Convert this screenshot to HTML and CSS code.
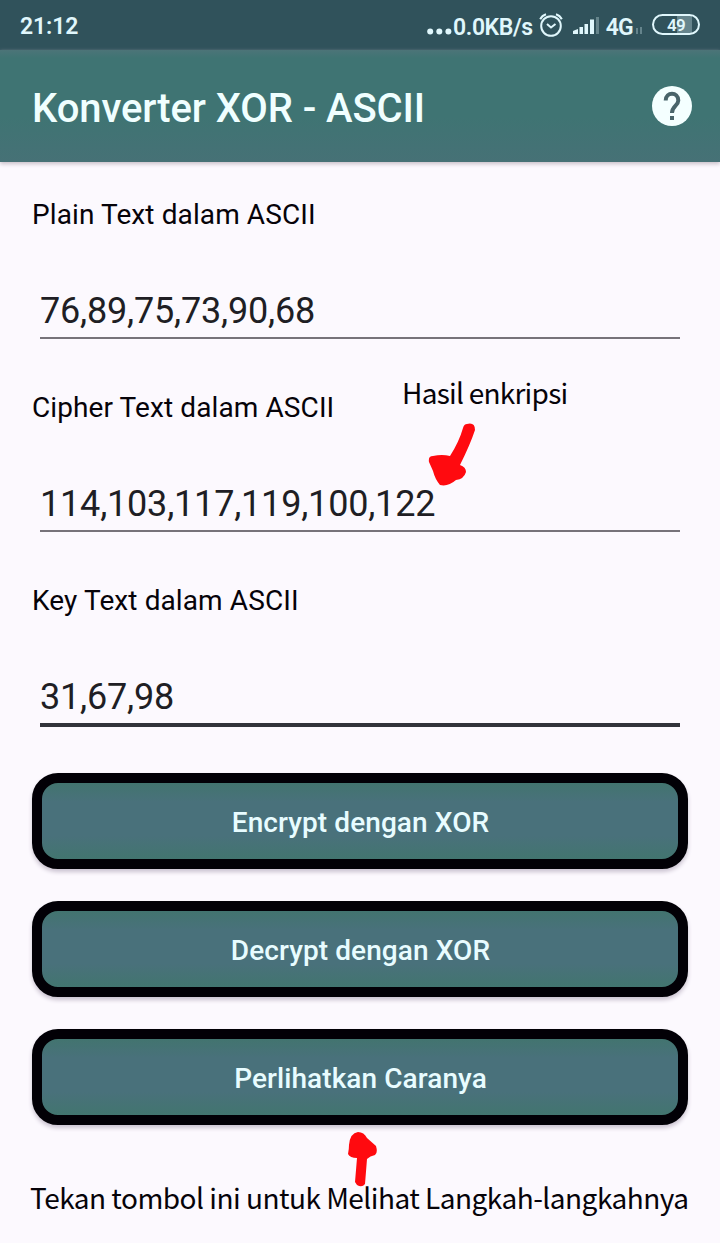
FILE: index.html
```html
<!DOCTYPE html>
<html lang="id">
<head>
<meta charset="utf-8">
<title>Konverter XOR - ASCII</title>
<link rel="stylesheet" href="styles.css">
</head>
<body>
<div class="screen">
  <div class="status">
    <span class="clock">21:12</span>
    <div class="indicators">
      <svg class="dots" width="26" height="24" viewBox="0 0 26 24"><circle cx="3.200" cy="16.500" r="3"/><circle cx="12.300" cy="16.500" r="3"/><circle cx="21.400" cy="16.500" r="3"/></svg>
      <span class="speed">0.0KB/s</span>
      <svg class="alarm" width="24" height="26" viewBox="0 0 24 26"><circle cx="12" cy="14" r="9.8"/><path d="M1.200 7.200Q3 3.500 7 2.200M22.800 7.200Q21 3.500 17 2.200M8 12L12 15.500L16.500 12"/></svg>
      <svg class="signal" width="26" height="20" viewBox="0 0 26 20"><path d="M0 18v-3q2-1 5-2v5zM6.500 18v-7h3.500v7zM11.500 18V8h3.500v10zM17 18V3.500h4V18z"/><path class="faint" d="M23 18V1h3v17z"/></svg>
      <span class="network">4G</span>
      <svg class="sub-signal" width="8" height="20" viewBox="0 0 8 20"><path d="M0 15v-6h2v6zM4 15V8h2v7z"/></svg>
      <span class="battery"><span>49</span></span>
    </div>
  </div>
  <header class="appbar">
    <h1 class="title">Konverter XOR - ASCII</h1>
    <svg class="help" width="40" height="40" viewBox="0 0 40 40"><circle cx="20" cy="20" r="20"/><path d="M13.700 14.500C13.700 5.500 26.300 5.500 26.300 14.500C26.300 19.500 20 20 20 27"/><path class="point" d="M18 30h4v4h-4z"/></svg>
  </header>
  <main class="content">
    <section class="field"><div class="label">Plain Text dalam ASCII</div><div class="value">76,89,75,73,90,68</div></section>
    <section class="field"><div class="label">Cipher Text dalam ASCII</div><div class="value">114,103,117,119,100,122</div></section>
    <section class="field"><div class="label">Key Text dalam ASCII</div><div class="value focused">31,67,98</div></section>
    <div class="actions">
      <button class="action">Encrypt dengan XOR</button>
      <button class="action">Decrypt dengan XOR</button>
      <button class="action">Perlihatkan Caranya</button>
    </div>
  </main>
  <div class="note result">Hasil enkripsi</div>
  <svg class="arrow arrow-result" width="54" height="70" viewBox="0 0 54 70"><path d="M43 4Q51 2 51 10Q46 25 36 45Q42 47 42 52Q40 59 32 60Q24 67 16 65Q11 59 9 51L5 42Q4 36 9 36Q18 34 26 36Q35 22 39 8Q40 4 43 4z"/></svg>
  <svg class="arrow arrow-steps" width="36" height="62" viewBox="0 0 36 62"><path d="M16 3Q22 3 25 9L34 17Q36 24 33 26Q28 27 25 30L23 55Q20 59 15 56L13 53L15 29Q8 29 6 25Q7 20 7 16Q8 4 16 3z"/></svg>
  <div class="note steps">Tekan tombol ini untuk Melihat Langkah-langkahnya</div>
</div>
</body>
</html>
```
FILE: styles.css
```css
* { box-sizing: border-box; }
body { margin: 0; font-family: Roboto, sans-serif; }
.screen { position: relative; width: 720px; height: 1243px; overflow: hidden; background: #fcf9fe; color: #060309; }
.status { display: flex; align-items: center; justify-content: space-between; height: 50px; padding: 0 20px; background: #30525b; color: #e0f7fc; font-weight: 600; font-size: 23px; }
.clock { padding-top: 3px; letter-spacing: -.1px; }
.indicators { display: flex; align-items: center; height: 50px; padding-top: 2px; }
.indicators svg { fill: #e0f7fc; }
.dots { margin-top: 1px; }
.speed { padding-top: 2px; letter-spacing: -.4px; }
.indicators .alarm { fill: none; stroke: #e0f7fc; stroke-width: 2; margin: -3px 10px 0 6px; }
.signal { margin-right: 7px; margin-top: 0; }
.faint, .sub-signal { opacity: .3; }
.network { letter-spacing: -.8px; padding-top: 2px; }
.sub-signal { margin: 6px 8px 0 3px; }
.battery { display: flex; align-items: center; justify-content: center; width: 48px; height: 21px; border: 2px solid #e0f7fc; border-radius: 11px; background: linear-gradient(90deg, transparent 52%, #66858d 52%, #66858d 86%, transparent 86%); font-size: 17px; letter-spacing: -.8px; margin-top: -3px; }
.appbar { position: relative; display: flex; align-items: center; justify-content: space-between; height: 112px; padding: 0 28px 0 32px; background: linear-gradient(#4c7478 0, #3f7473 8px, #3f7473 60%, #467176); box-shadow: 0 2px 4px #c8bfc9; }
.title { margin: 5px 0 0; font-size: 40px; font-weight: 500; letter-spacing: -.1px; color: #f0ffff; }
.help { fill: #f4ffff; }
.help path { fill: none; stroke: #49646a; stroke-width: 4; }
.help .point { fill: #49646a; stroke: none; }
.content { padding: 36px 32px 0; }
.field { height: 193px; }
.label { height: 33px; line-height: 33px; font-size: 28px; letter-spacing: .1px; }
.value { height: 81px; margin: 27px 8px 0; padding-top: 32px; line-height: 42px; font-size: 36px; letter-spacing: -.19px; color: #201e24; border-bottom: 2px solid #77737a; }
.value.focused { height: 83px; border-bottom: 4px solid #32333a; }
.actions { display: flex; flex-direction: column; gap: 32px; margin-top: -4px; }
.action { height: 96px; padding: 2px 0 0 1px; border: 10px solid #020006; border-radius: 26px; background: linear-gradient(#42746f, #49717b 25%, #49717b 70%, #42756f); box-shadow: 0 3px 4px #cac2d0; color: #e8fcff; font: 500 28px Roboto, sans-serif; letter-spacing: .08px; }
.note { position: absolute; font-family: "Noto Sans CJK SC", sans-serif; font-size: 28px; line-height: 40px; white-space: nowrap; color: #060309; }
.result { left: 402px; top: 372px; letter-spacing: -.75px; }
.steps { left: 30px; top: 1177px; letter-spacing: -.52px; }
.arrow { position: absolute; fill: #ff0a0f; filter: blur(.7px); }
.arrow-result { left: 424px; top: 420px; }
.arrow-steps { left: 342px; top: 1129px; }
```
